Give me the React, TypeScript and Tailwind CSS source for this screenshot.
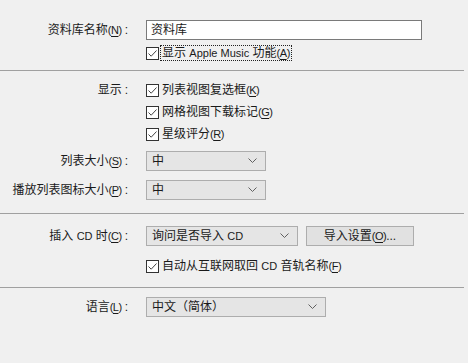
import React from "react";

const font = { fontFamily: '"Liberation Sans", "Noto Sans CJK SC", sans-serif' };

function Acc({ k }: { k: string }) {
  return (
    <span className="text-[11px] tracking-[-0.5px]">
      (<span className="underline underline-offset-2">{k}</span>)
    </span>
  );
}

function L({ children }: { children: React.ReactNode }) {
  return <span className="text-[11px]">{children}</span>;
}

function Colon() {
  return <span className="ml-[3px]">:</span>;
}

function Check({ children, focus }: { children: React.ReactNode; focus?: boolean }) {
  return (
    <div className="flex items-center h-[14px]">
      <div className="w-[13px] h-[13px] border border-[#333] bg-white flex items-center justify-center shrink-0">
        <svg width="11" height="11" viewBox="0 0 11 11">
          <path d="M1.5 5.5 L4.2 8.2 L9.5 2.5" fill="none" stroke="#444" strokeWidth="1" />
        </svg>
      </div>
      <div
        className={
          "ml-[2px] pl-[1px] pr-[1px] leading-[14px] " +
          (focus ? "outline-1 outline-dotted outline-[#222]" : "")
        }
      >
        {children}
      </div>
    </div>
  );
}

function Select({ w, children }: { w: string; children: React.ReactNode }) {
  return (
    <div
      className={
        "h-[20px] bg-[#e5e5e5] border border-[#adadad] flex items-center justify-between pl-[5px] pr-[8px] " + w
      }
    >
      <span className="leading-[18px]">{children}</span>
      <svg width="9" height="6" viewBox="0 0 9 6">
        <path d="M0.5 0.5 L4.5 4.5 L8.5 0.5" fill="none" stroke="#606060" strokeWidth="1" />
      </svg>
    </div>
  );
}

function Label({ children }: { children: React.ReactNode }) {
  return <div className="w-[132px] text-right pr-[4px] shrink-0 leading-[20px]">{children}</div>;
}

function Sep() {
  return <div className="h-px bg-[#a0a0a0] w-[464px]" />;
}

export default function App() {
  return (
    <div className="w-[468px] h-[363px] bg-[#f0f0f0] text-[12px] text-[#1a1a1a] overflow-hidden" style={font}>
      <div className="pt-[20px]">
        <div className="flex items-center h-[20px]">
          <Label>
            资料库名称<Acc k="N" />
            <Colon />
          </Label>
          <div className="ml-[14px] w-[276px] h-[20px] bg-white border border-[#7a7a7a] pl-[4px] leading-[18px]">
            资料库
          </div>
        </div>
        <div className="mt-[6px] ml-[146px]">
          <Check focus>
            显示 <L>Apple Music</L> 功能<Acc k="A" />
          </Check>
        </div>
      </div>
      <div className="mt-[10px]">
        <Sep />
      </div>
      <div className="mt-[12px] flex">
        <div className="w-[132px] text-right pr-[4px] leading-[14px]">
          显示<Colon />
        </div>
        <div className="ml-[14px] flex flex-col gap-[8px]">
          <Check>
            列表视图复选框<Acc k="K" />
          </Check>
          <Check>
            网格视图下载标记<Acc k="G" />
          </Check>
          <Check>
            星级评分<Acc k="R" />
          </Check>
        </div>
      </div>
      <div className="mt-[10px] flex items-center">
        <Label>
          列表大小<Acc k="S" />
          <Colon />
        </Label>
        <div className="ml-[14px]">
          <Select w="w-[120px]">中</Select>
        </div>
      </div>
      <div className="mt-[9px] flex items-center">
        <Label>
          播放列表图标大小<Acc k="P" />
          <Colon />
        </Label>
        <div className="ml-[14px]">
          <Select w="w-[120px]">中</Select>
        </div>
      </div>
      <div className="mt-[13px]">
        <Sep />
      </div>
      <div className="mt-[12px] flex items-center">
        <Label>
          插入 <L>CD</L> 时<Acc k="C" />
          <Colon />
        </Label>
        <div className="ml-[14px] flex items-center">
          <Select w="w-[152px]">
            询问是否导入 <L>CD</L>
          </Select>
          <div className="ml-[8px] w-[108px] h-[20px] bg-[#e1e1e1] border border-[#adadad] flex items-center justify-center leading-[18px]">
            导入设置<Acc k="O" />...
          </div>
        </div>
      </div>
      <div className="mt-[13px] ml-[146px]">
        <Check>
          自动从互联网取回 <L>CD</L> 音轨名称<Acc k="F" />
        </Check>
      </div>
      <div className="mt-[14px]">
        <Sep />
      </div>
      <div className="mt-[9px] flex items-center">
        <Label>
          语言<Acc k="L" />
          <Colon />
        </Label>
        <div className="ml-[14px]">
          <Select w="w-[180px]">中文（简体）</Select>
        </div>
      </div>
    </div>
  );
}
